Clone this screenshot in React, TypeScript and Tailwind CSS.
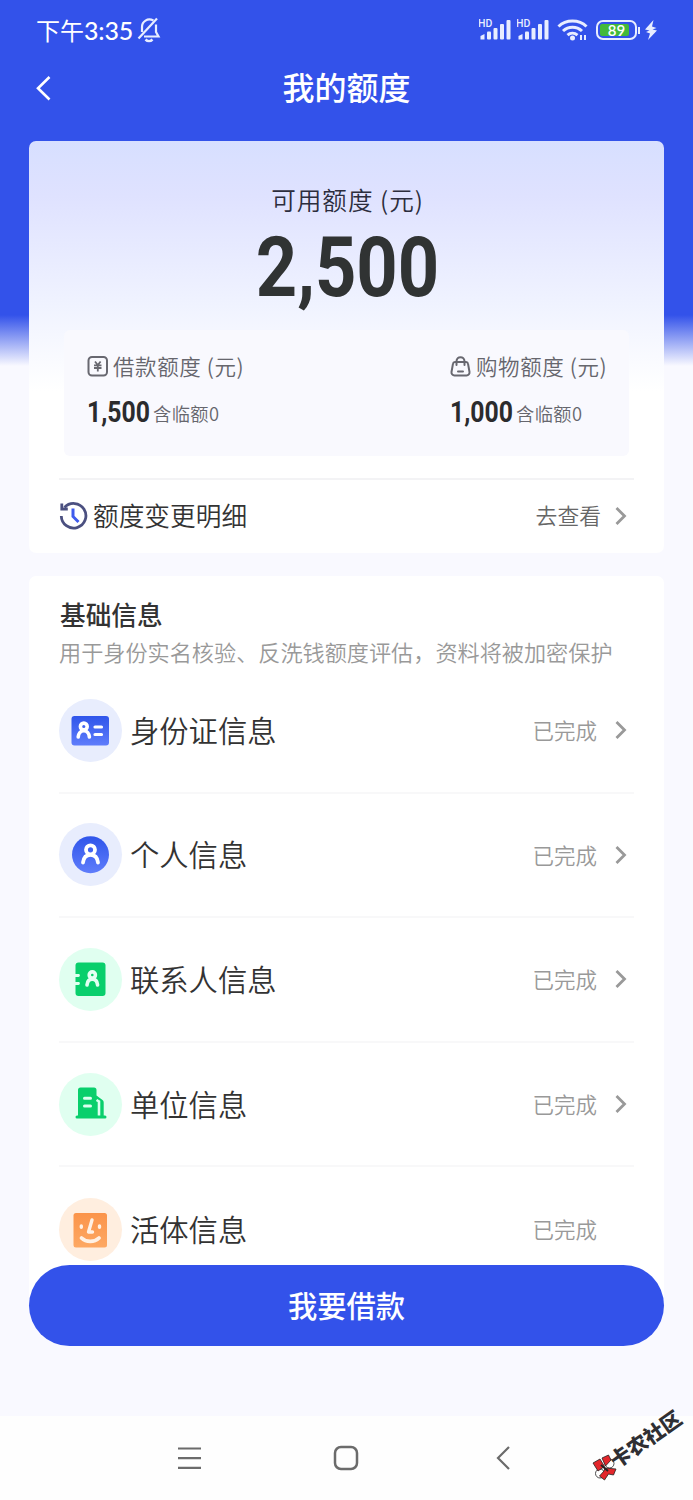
import type { ReactNode } from 'react';

interface InfoItem {
  label: string;
  status: string;
  iconBg: string;
  icon: ReactNode;
  hasArrow: boolean;
}

const Chevron = () => (
  <svg width="14" height="20" viewBox="0 0 14 20" fill="none">
    <path d="M2.5 2L10.5 10L2.5 18" stroke="#999" strokeWidth="2.8" />
  </svg>
);

const IdCardIcon = () => (
  <svg width="63" height="63" viewBox="0 0 63 63" fill="none">
    <defs>
      <linearGradient id="blue" x1="0" y1="0" x2="0" y2="1">
        <stop stopColor="#2f55ea" />
        <stop offset="1" stopColor="#5f7dfb" />
      </linearGradient>
    </defs>
    <rect x="12.5" y="17" width="37.5" height="29.5" rx="3" fill="url(#blue)" />
    <g stroke="#fff" strokeWidth="3.6" strokeLinecap="round">
      <circle cx="24.8" cy="27.5" r="3.4" />
      <path d="M19.2 38c.3-3.500 2.300-6.300 5.600-6.300s5.300 2.800 5.600 6.300" />
      <path d="M36 28h6.500M36 35.500h6.500" strokeWidth="3.2" />
    </g>
  </svg>
);

const PersonIcon = () => (
  <svg width="63" height="63" viewBox="0 0 63 63" fill="none">
    <circle cx="31.5" cy="31.7" r="18.5" fill="url(#blue)" />
    <g stroke="#fff" strokeWidth="3.8" strokeLinecap="round">
      <circle cx="31.5" cy="26.8" r="4.5" />
      <path d="M24 39.500c.5-4.500 3-7.700 7.500-7.700s7 3.200 7.500 7.700" />
    </g>
  </svg>
);

const ContactIcon = () => (
  <svg width="63" height="63" viewBox="0 0 63 63" fill="none">
    <rect x="16.5" y="14.500" width="30" height="33.5" rx="3" fill="#09cf6c" />
    <g stroke="#e0fff0" strokeWidth="2.8" strokeLinecap="round">
      <path d="M14 27.500h5.500M14 35.500h5.500" />
    </g>
    <g stroke="#e4fff3" strokeWidth="3.6" strokeLinecap="round">
      <circle cx="33.3" cy="27" r="3.1" />
      <path d="M28 37c.3-3.500 2-5.900 5.300-5.900s5 2.400 5.300 5.900" />
    </g>
  </svg>
);

const CompanyIcon = () => (
  <svg width="63" height="63" viewBox="0 0 63 63" fill="none">
    <path
      d="M19 42.500V17a2.500 2.500 0 0 1 2.500-2.500H35a2.500 2.500 0 0 1 2.500 2.500V22.500l6 4.500a3 3 0 0 1 1.200 2.500V42.500H46a1.500 1.500 0 0 1 0 3H18a1.500 1.500 0 0 1 0-3z"
      fill="#09cf6c"
    />
    <g stroke="#dcfff0" strokeWidth="3" strokeLinecap="round">
      <path d="M25.500 25.200h6M25.500 33h6" />
      <path d="M37.500 27l2.500 1.500V42.500" strokeLinecap="butt" strokeWidth="2.6" />
    </g>
  </svg>
);

const FaceIcon = () => (
  <svg width="63" height="63" viewBox="0 0 63 63" fill="none">
    <defs>
      <linearGradient id="orange" x1="0" y1="0" x2="0" y2="1">
        <stop stopColor="#fb944a" />
        <stop offset="1" stopColor="#fda863" />
      </linearGradient>
    </defs>
    <rect x="14.5" y="15" width="33.5" height="34.5" rx="2.5" fill="url(#orange)" />
    <g stroke="#fff1e4" strokeWidth="3.4" strokeLinecap="round" strokeLinejoin="round">
      <path d="M33 22l-3.500 12h4" />
      <path d="M22.500 40c4.500 4.500 13 4.500 17.500 0" strokeWidth="3.8" />
      <path d="M22.300 28v1.200M40.500 28v1.200" />
    </g>
  </svg>
);

const items: InfoItem[] = [
  { label: '身份证信息', status: '已完成', iconBg: 'bg-[#e8edfd]', icon: <IdCardIcon />, hasArrow: true },
  { label: '个人信息', status: '已完成', iconBg: 'bg-[#e8edfd]', icon: <PersonIcon />, hasArrow: true },
  { label: '联系人信息', status: '已完成', iconBg: 'bg-[#e0fff0]', icon: <ContactIcon />, hasArrow: true },
  { label: '单位信息', status: '已完成', iconBg: 'bg-[#e0fff0]', icon: <CompanyIcon />, hasArrow: true },
  { label: '活体信息', status: '已完成', iconBg: 'bg-[#ffeedf]', icon: <FaceIcon />, hasArrow: false },
];

const Signal = () => (
  <svg width="34" height="24" viewBox="0 0 34 24" fill="#e8edff">
    <text x="-1" y="8.500" fontSize="10.500" fontWeight="500" fontFamily="Roboto, sans-serif">
      HD
    </text>
    <path d="M1.500 21.500v-3.500l4-2v5.500z" />
    <rect x="8" y="13.500" width="4" height="8" rx="1" />
    <rect x="14.500" y="10" width="4" height="11.500" rx="1" />
    <rect x="21" y="6" width="4" height="15.500" rx="1" />
    <rect x="27.500" y="2" width="4" height="19.500" rx="1" />
  </svg>
);

const StatusBar = () => (
  <div className="flex h-[60px] shrink-0 items-center pr-[36px] pl-[36px] text-white">
    <span className="mb-px text-[24px] leading-[30px] font-normal">下午</span>
    <span className="w-[50px] font-[Lato] text-[25px] leading-[30px] font-medium tracking-[-0.2px]">3:35</span>
    <svg className="ml-[3px]" width="24" height="26" viewBox="0 0 24 26" fill="none" stroke="#e8edff" strokeWidth="2.2">
      <path d="M16.500 3.500C10.500 .5 5 4.500 5 10v5M19 7.500v7.500l2.500 4.500H7" />
      <path d="M20 1.500L1.500 21.500" />
      <path d="M8.500 22.500c2 2 5 2 7 0" strokeWidth="2.5" />
    </svg>
    <div className="ml-auto flex items-center">
      <Signal />
      <div className="ml-[4px]">
        <Signal />
      </div>
      <svg className="ml-[6px]" width="32" height="24" viewBox="0 0 32 24" fill="none" stroke="#e8edff" strokeWidth="3">
        <path d="M1.500 8.500c7.500-7.300 20.500-7.300 28 0" />
        <path d="M6 13c5.500-5 13.500-5 19 0" />
        <path d="M10.500 17.200c2.800-2.500 7-2.500 10 0" />
        <circle cx="15.500" cy="20" r="2.5" fill="#e8edff" stroke="none" />
        <path d="M24 17v5M28 17v5" strokeWidth="2" />
      </svg>
      <div className="ml-[7px] flex h-[20px] w-[41px] items-center rounded-[7px] border-2 border-[#e8edff] p-[2px]">
        <div className="flex h-full w-[29px] items-center justify-center rounded-[2px] bg-[#43b93a] pl-[4px] font-[Lato] text-[15px] leading-none font-semibold">
          89
        </div>
      </div>
      <div className="ml-px h-[7px] w-[2px] bg-[#e8edff]" />
      <svg className="ml-[5px]" width="12" height="20" viewBox="0 0 12 20" fill="#e8edff">
        <path d="M8.500 0L0 9.500l4.500 1L1 12l4 1.500L3 20l9-9.500-4.500-1L11.500 8 7 6.500z" />
      </svg>
    </div>
  </div>
);

const YuanIcon = () => (
  <svg width="21" height="21" viewBox="0 0 21 21" fill="none" stroke="#686870" strokeWidth="2">
    <rect x="1.5" y="1" width="18.5" height="18.5" rx="3.5" />
    <path d="M8 5.500l2.800 3.500L13.600 5.500M7 9.300h7.500M7 12h7.500M10.800 9v6.500" strokeWidth="1.8" />
  </svg>
);

const BagIcon = () => (
  <svg width="21" height="21" viewBox="0 0 21 21" fill="none" stroke="#686870" strokeWidth="2">
    <path d="M5 6h11a2 2 0 0 1 2 1.700l1.500 8.300a3 3 0 0 1-3 3.500H4.500a3 3 0 0 1-3-3.500L3 7.700A2 2 0 0 1 5 6z" />
    <path d="M6.500 9V5.500C6.500 -.3 14.500 -.3 14.500 5.500V9M8 15.500h5" strokeLinecap="round" />
  </svg>
);

interface QuotaProps {
  icon: ReactNode;
  title: string;
  amount: string;
}

const Quota = ({ icon, title, amount }: QuotaProps) => (
  <div className="w-[160px]">
    <div className="flex h-[32px] items-center gap-[5px] whitespace-nowrap text-[#66666d]">
      {icon}
      <span className="text-[21.5px] tracking-[0.6px]">{title} (元)</span>
    </div>
    <div className="mt-[13px] flex h-[34px] items-center whitespace-nowrap">
      <div className="w-[66px]">
        <span className="inline-block origin-left scale-x-[0.84] font-[Roboto] text-[29.5px] leading-[34px] font-bold text-[#2b2b2d]">
          {amount}
        </span>
      </div>
      <span className="mt-[4px] text-[18.3px] tracking-[0.4px] text-[#66666d]">含临额0</span>
    </div>
  </div>
);

const QuotaCard = () => (
  <section className="mx-[29px] flex h-[412px] shrink-0 flex-col rounded-[7px] bg-[linear-gradient(180deg,#d7dfff_0,#dfe2ff_55px,#f0f3ff_165px,#ffffff_250px)] px-[30px]">
    <div className="mt-[41px] pl-[2px] text-center text-[24.6px] leading-[34px] tracking-[1px] text-[#2c2d3d]">
      可用额度 (元)
    </div>
    <div className="flex h-[93px] items-center justify-center pt-[11px] pl-px">
      <span className="scale-x-[0.87] font-[Roboto] text-[83px] leading-[92px] font-bold text-[#303333]">2,500</span>
    </div>
    <div className="mx-[5px] mt-[21px] flex h-[126px] shrink-0 justify-between rounded-[6px] bg-[#f9f9fe] pt-[20px] pr-[19px] pl-[23px]">
      <Quota icon={<YuanIcon />} title="借款额度" amount="1,500" />
      <Quota icon={<BagIcon />} title="购物额度" amount="1,000" />
    </div>
    <div className="mt-[22px] flex flex-1 items-center border-t-2 border-[#f3f3f5] pb-[2px]">
      <svg width="30" height="30" viewBox="0 0 30 30" fill="none" stroke="#4b5080" strokeWidth="2.8">
        <path d="M5.500 6.500A12.300 12.300 0 1 1 2.300 15" />
        <path d="M2.800 2.500v5.500h6" />
        <path d="M14 7.500v8l5.500 5.500" stroke="#3f5bed" strokeWidth="3" />
      </svg>
      <span className="ml-[4px] text-[25.7px] text-[#333]">额度变更明细</span>
      <span className="mr-[13px] ml-auto text-[21.8px] text-[#666]">去查看</span>
      <div className="mr-[6px]">
        <Chevron />
      </div>
    </div>
  </section>
);

const InfoRow = ({ item, last }: { item: InfoItem; last: boolean }) => (
  <div className={`flex h-[124.6px] shrink-0 items-center ${last ? 'pb-px' : 'border-b-2 border-[#f8f8f9]'}`}>
    <div className={`size-[63px] overflow-hidden rounded-full ${item.iconBg}`}>{item.icon}</div>
    <span className="mb-px ml-[8px] text-[29.3px] text-[#333]">{item.label}</span>
    <span className="mr-[17px] ml-auto text-[21.5px] text-[#999]">{item.status}</span>
    <div className={`mr-[6px] ${item.hasArrow ? '' : 'invisible'}`}>
      <Chevron />
    </div>
  </div>
);

export default function App() {
  return (
    <div className="flex h-[1500px] w-[693px] flex-col overflow-hidden bg-[linear-gradient(180deg,#3352ea_0,#3352ea_315px,#f9f9ff_366px)] font-['Noto_Sans_CJK_SC',sans-serif] font-[350]">
      <StatusBar />
      <header className="flex h-[81px] shrink-0 items-start justify-between px-[36px] pt-[5px] text-white">
        <svg className="mt-[10px]" width="16" height="26" viewBox="0 0 16 26" fill="none">
          <path d="M13.500 2L2 13.200L13.500 24.500" stroke="#fff" strokeWidth="2.6" />
        </svg>
        <h1 className="text-[32px] leading-[42px] font-medium">我的额度</h1>
        <div className="w-[16px]" />
      </header>

      <QuotaCard />

      <section className="mx-[29px] mt-[23px] flex h-[729px] shrink-0 flex-col overflow-hidden rounded-t-[7px] bg-white px-[30px]">
        <h2 className="mt-[19px] ml-px text-[25.7px] leading-[38px] font-medium text-[#333]">基础信息</h2>
        <p className="h-[36px] text-[22.15px] leading-[36px] whitespace-nowrap text-[#999]">
          用于身份实名核验、反洗钱额度评估，资料将被加密保护
        </p>
        {items.map((item, index) => (
          <InfoRow key={item.label} item={item} last={index === items.length - 1} />
        ))}
      </section>

      <button
        type="button"
        className="relative mx-[29px] -mt-[40px] h-[81px] shrink-0 rounded-full bg-[#3352ea] pb-[2px] text-[29.3px] font-medium text-white"
      >
        我要借款
      </button>

      <nav className="relative mt-auto flex h-[84px] shrink-0 items-center justify-between bg-[#fefefe] pr-[182px] pl-[177px]">
        <svg width="25" height="26" viewBox="0 0 25 26" stroke="#6b6b6b" strokeWidth="2.2">
          <path d="M1 3.500h23M1 13.200h23M1 22.800h23" />
        </svg>
        <svg className="mr-[6px]" width="26" height="26" viewBox="0 0 26 26" fill="none" stroke="#6b6b6b" strokeWidth="2.5">
          <rect x="2" y="2" width="22" height="22" rx="6" />
        </svg>
        <svg width="15" height="26" viewBox="0 0 15 26" fill="none" stroke="#6b6b6b" strokeWidth="2.2">
          <path d="M13 2L2 13L13 24" />
        </svg>
        {/* community watermark */}
        <svg className="absolute top-[38px] left-[592px]" width="28" height="28" viewBox="0 0 28 28" stroke="#222" strokeWidth="0.8">
          <circle cx="17.5" cy="9.500" r="4.5" fill="#fff" />
          <circle cx="8" cy="19.500" r="4.5" fill="#fff" />
          <path d="M1 9l7-4 4.500 7.500-6.500 4.500zM10 4l6.500-3 2.500 5-5.500 6zM13 14l11 1-2.500 6-5-1-4 6-5-4 4.500-5z" fill="#e3262b" />
          <path d="M9 11l7 6" strokeWidth="2" />
        </svg>
        <span className="absolute top-[12px] left-[604px] -rotate-[35deg] text-[20.5px] leading-none font-black whitespace-nowrap text-[#2f2f33]">
          卡农社区
        </span>
      </nav>
    </div>
  );
}
